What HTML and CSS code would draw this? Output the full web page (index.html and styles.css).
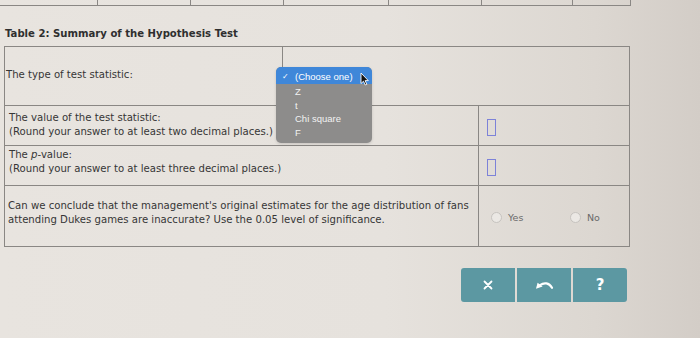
FILE: index.html
```html
<!DOCTYPE html>
<html>
<head>
<meta charset="utf-8">
<link rel="stylesheet" href="styles.css">
</head>
<body>
<div class="prev">
  <span class="c1"></span><span class="c2"></span><span class="c3"></span><span class="c4"></span><span class="c5"></span><span class="c6"></span><span class="c7"></span>
</div>
<h2 class="title">Table 2: Summary of the Hypothesis Test</h2>
<div class="summary">
  <div class="row row1">
    <div class="cell label one">The type of test statistic:</div>
    <div class="cell answer select-cell">
      <div class="dropdown">
        <div class="opt selected"><span class="check">✓</span>(Choose one)
          <svg class="cursor" width="9" height="14" viewBox="0 0 9 14"><path d="M1 1 L1 11.5 L3.5 9.2 L5.3 13 L6.8 12.3 L5.1 8.6 L8.3 8.6 Z" fill="#111" stroke="#fff" stroke-width="0.9" stroke-linejoin="round"/></svg>
        </div>
        <div class="opt">Z</div>
        <div class="opt">t</div>
        <div class="opt">Chi square</div>
        <div class="opt">F</div>
      </div>
    </div>
  </div>
  <div class="row row2">
    <div class="cell label">The value of the test statistic:<br>(Round your answer to at least two decimal places.)</div>
    <div class="cell answer"><span class="input"></span></div>
  </div>
  <div class="row row3">
    <div class="cell label">The <i>p</i>-value:<br>(Round your answer to at least three decimal places.)</div>
    <div class="cell answer"><span class="input"></span></div>
  </div>
  <div class="row row4">
    <div class="cell label">Can we conclude that the management's original estimates for the age distribution of fans attending Dukes games are inaccurate? Use the 0.05 level of significance.</div>
    <div class="cell answer radios">
      <label class="radio"><span class="circle"></span>Yes</label>
      <label class="radio"><span class="circle"></span>No</label>
    </div>
  </div>
</div>
<div class="actions">
  <button class="btn first" aria-label="Clear">
    <svg width="10" height="10" viewBox="0 0 10 10"><path d="M1.5 1.5 L8.5 8.5 M8.5 1.5 L1.5 8.5" stroke="#fff" stroke-width="1.8" stroke-linecap="round"/></svg>
  </button>
  <button class="btn" aria-label="Undo">
    <svg width="20" height="9" viewBox="0 0 20 9"><path d="M6 4.2 C10 1.2 15 1.6 18 6.8" fill="none" stroke="#fff" stroke-width="2.2" stroke-linecap="round"/><path d="M2 7.8 L3.6 1.8 L8.6 5.6 Z" fill="#fff"/></svg>
  </button>
  <button class="btn last" aria-label="Help"><span class="q">?</span></button>
</div>
</body>
</html>
```

FILE: styles.css
```css
html, body {
  margin: 0;
  padding: 0;
}
body {
  width: 700px;
  height: 338px;
  overflow: hidden;
  background: linear-gradient(90deg, #e8e4df 0%, #e6e2dd 55%, #dcd7d1 85%, #d3cdc7 100%);
  font-family: "DejaVu Sans", Verdana, sans-serif;
  color: #363636;
}
.prev {
  display: flex;
  width: 631px;
  height: 5px;
  border-bottom: 1px solid #8a8784;
}
.prev span {
  box-sizing: border-box;
  border-right: 1px solid #8a8784;
}
.prev .c1 { width: 98px; }
.prev .c2 { width: 93px; }
.prev .c3 { width: 93px; }
.prev .c4 { width: 105px; }
.prev .c5 { width: 93px; }
.prev .c6 { width: 91px; }
.prev .c7 { width: 58px; }

.title {
  margin: 22px 0 0 5px;
  font-size: 10.1px;
  line-height: 12px;
  font-weight: bold;
  color: #2f2f2f;
}
.summary {
  margin: 6px 0 0 4px;
  width: 626px;
  box-sizing: border-box;
  border: 1px solid #8a8784;
  font-size: 10.15px;
  line-height: 14px;
}
.row {
  display: grid;
  grid-template-columns: 474px 1fr;
  border-bottom: 1px solid #8a8784;
}
.row:last-child { border-bottom: none; }
.row1 { grid-template-columns: 278px 1fr; height: 58px; }
.row2 { height: 39px; }
.row3 { height: 39px; }
.row4 { height: 60px; }
.cell {
  box-sizing: border-box;
}
.label {
  border-right: 1px solid #8a8784;
  padding-left: 4px;
}
.row1 .label {
  display: flex;
  align-items: center;
  padding-left: 1px;
  padding-bottom: 3px;
}
.row2 .label { padding-top: 5px; }
.row3 .label { padding-top: 2px; }
.row4 .label { padding: 13px 0 0 3px; }
.answer {
  display: flex;
  align-items: center;
  padding-left: 8px;
}
.select-cell {
  position: relative;
}
.input {
  display: block;
  width: 9px;
  height: 17px;
  box-sizing: border-box;
  border: 1px solid #7d82d8;
  margin-top: 3px;
}
.radios {
  padding-left: 12px;
  padding-top: 3px;
  gap: 0;
}
.radio {
  display: flex;
  align-items: center;
  color: #6a6a6a;
  font-size: 9.5px;
}
.radio:first-child { width: 79px; }
.circle {
  display: inline-block;
  width: 11px;
  height: 11px;
  box-sizing: border-box;
  border: 1px solid #c6c3bf;
  border-radius: 50%;
  background: #ebe8e4;
  margin-right: 6px;
}

.dropdown {
  position: absolute;
  left: -7px;
  top: 20px;
  width: 96px;
  height: 76px;
  box-sizing: border-box;
  background: #8d8c8b;
  border-radius: 5px;
  font-family: "Liberation Sans", Arial, sans-serif;
  font-size: 9.5px;
  color: #f2f2f2;
  padding-top: 0;
  box-shadow: 0 1px 3px rgba(0,0,0,0.15);
}
.opt {
  height: 13.5px;
  line-height: 13.5px;
  padding-left: 19px;
  position: relative;
}
.opt.selected {
  height: 17px;
  line-height: 19px;
  background: #3f87d9;
  border-radius: 5px 5px 0 0;
  color: #fff;
  margin-bottom: 1px;
}
.check {
  position: absolute;
  left: 6px;
  top: 0;
  font-size: 8px;
}
.cursor {
  position: absolute;
  left: 84px;
  top: 5px;
}

.actions {
  display: flex;
  gap: 2px;
  margin: 21px 0 0 461px;
}
.btn {
  width: 54px;
  height: 34px;
  border: none;
  padding: 0;
  margin: 0;
  background: #5c98a2;
  display: flex;
  align-items: center;
  justify-content: center;
  font-family: "DejaVu Sans", sans-serif;
}
.btn.first { border-radius: 3px 0 0 3px; }
.btn.last { border-radius: 0 3px 3px 0; }
.q {
  color: #fff;
  font-weight: bold;
  font-size: 15px;
  line-height: 15px;
}
```
